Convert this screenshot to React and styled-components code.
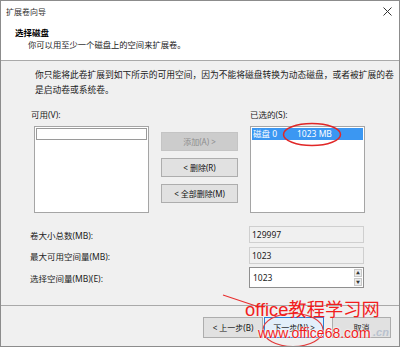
import React from "react";
import styled, { createGlobalStyle } from "styled-components";

const GlobalStyle = createGlobalStyle`
  html, body { margin: 0; padding: 0; background: #fff; }
  body { font-family: "Noto Sans", "Noto Sans CJK SC", sans-serif; }
`;

const Window = styled.div`
  position: relative;
  box-sizing: border-box;
  width: 400px;
  height: 347px;
  border: 1px solid #8c8c8c;
  background: #f0f0f0;
  display: flex;
  flex-direction: column;
  overflow: hidden;
  font-size: 8.5px;
  color: #1b1b1b;
`;

const Header = styled.div`
  box-sizing: border-box;
  height: 60px;
  background: #fff;
  border-bottom: 1px solid #a9a9a9;
`;

const TitleBar = styled.div`
  height: 20px;
  display: flex;
  align-items: center;
  justify-content: space-between;
  padding: 0 7px 0 5px;
  font-size: 8px;
  color: #333;
`;

const PageTitle = styled.div`
  margin: 6px 0 0 14px;
  line-height: 12px;
  font-weight: bold;
  font-size: 8.5px;
  color: #000;
`;

const PageSub = styled.div`
  margin-left: 27px;
  line-height: 12px;
  font-size: 8.3px;
`;

const Body = styled.div`
  flex: 1;
`;

const Desc = styled.div`
  margin: 7px 0 0 34px;
  line-height: 15px;
  font-size: 8.75px;
  white-space: nowrap;
`;

const ListsGrid = styled.div`
  display: grid;
  grid-template-columns: 115px 77px 115px;
  column-gap: 12px;
  margin: 11px 0 0 33px;
`;

const ListColumn = styled.div`
  display: flex;
  flex-direction: column;
`;

const ListLabel = styled.div`
  height: 12px;
  line-height: 12px;
  margin: 0 0 5px ${(p) => p.$shift || 0}px;
`;

const ListBox = styled.div`
  box-sizing: border-box;
  height: 87px;
  background: #fff;
  border: 1px solid #a5a5a5;
  padding: 1px;
`;

const EmptyRow = styled.div`
  box-sizing: border-box;
  height: 12px;
  border: 1px solid #9a9a9a;
`;

const SelectedRow = styled.div`
  height: 12px;
  line-height: 12px;
  background: #3b97f2;
  color: #fff;
  display: flex;
  padding-left: 1px;
`;

const Cell = styled.span`
  width: ${(p) => p.$w}px;
`;

const ButtonStack = styled.div`
  display: flex;
  flex-direction: column;
  gap: 7px;
  padding-top: 23px;
`;

const Button = styled.div`
  box-sizing: border-box;
  height: ${(p) => p.$h || 19}px;
  width: ${(p) => p.$w || 77}px;
  display: flex;
  align-items: center;
  justify-content: center;
  font-size: 8px;
  border: 1px solid ${(p) => (p.$primary ? "#2a7fd4" : p.$disabled ? "#c4c4c4" : "#adadad")};
  background: ${(p) => (p.$primary ? "#e3effa" : p.$disabled ? "#cccccc" : "#e1e1e1")};
  color: ${(p) => (p.$disabled ? "#8c8c8c" : "#111")};
`;

const Fields = styled.div`
  display: flex;
  flex-direction: column;
  margin: 13px 0 0 29px;
`;

const FieldRow = styled.div`
  display: flex;
  align-items: center;
  margin-top: ${(p) => p.$gap || 0}px;
`;

const FieldLabel = styled.div`
  width: 219px;
`;

const ReadOnly = styled.div`
  box-sizing: border-box;
  width: 115px;
  height: 17px;
  line-height: 15px;
  padding-left: 2px;
  background: #f0f0f0;
  border: 1px solid #cfcfcf;
`;

const SpinBox = styled.div`
  box-sizing: border-box;
  width: 115px;
  height: 21px;
  display: flex;
  align-items: center;
  padding-left: 3px;
  background: #fff;
  border: 1px solid #8f8f8f;
`;

const SpinValue = styled.div`
  flex: 1;
`;

const SpinArrows = styled.div`
  width: 8px;
  height: 17px;
  margin-right: 1px;
  display: flex;
  flex-direction: column;
  gap: 1px;
`;

const Arrow = styled.div`
  flex: 1;
  background: #ececec;
  border: 1px solid #c8c8c8;
  display: flex;
  align-items: center;
  justify-content: center;
  font-size: 4px;
  color: #333;
`;

const Footer = styled.div`
  box-sizing: border-box;
  height: 41px;
  border-top: 1px solid #a9a9a9;
  display: flex;
  justify-content: flex-end;
  padding: 11px 8px 0 0;
`;

const FooterGroup = styled.div`
  display: flex;
  gap: ${(p) => p.$gap || 0}px;
  margin-left: ${(p) => p.$ml || 0}px;
`;

const Overlay = styled.svg`
  position: absolute;
  left: 0;
  top: 0;
  pointer-events: none;
`;

const MarkTitle = styled.div`
  position: absolute;
  left: 244px;
  top: 298px;
  font-family: "Liberation Sans", "Noto Sans CJK SC", sans-serif;
  font-size: 18.3px;
  line-height: 21px;
  color: #f21d1d;
  white-space: nowrap;
`;

const MarkUrl = styled.div`
  position: absolute;
  left: 257px;
  top: 324px;
  font-family: "Liberation Sans", sans-serif;
  font-size: 14px;
  line-height: 16px;
  color: #f01c1c;
  text-shadow: 0 0 2px #fff, 0 0 2px #fff;
  white-space: nowrap;
`;

const MarkCn = styled.div`
  position: absolute;
  left: 372px;
  top: 325px;
  font-family: "Liberation Sans", sans-serif;
  font-style: italic;
  font-weight: bold;
  font-size: 11px;
  color: #b9c2cf;
`;

const CloseIcon = () => (
  <svg width="9" height="9" viewBox="0 0 9 9">
    <path d="M0.5 0.5 L8.5 8.5 M8.5 0.5 L0.5 8.5" stroke="#333" strokeWidth="1" />
  </svg>
);

export default function App() {
  return (
    <>
      <GlobalStyle />
      <Window>
        <Header>
          <TitleBar>
            <span>扩展卷向导</span>
            <CloseIcon />
          </TitleBar>
          <PageTitle>选择磁盘</PageTitle>
          <PageSub>你可以用至少一个磁盘上的空间来扩展卷。</PageSub>
        </Header>
        <Body>
          <Desc>
            你只能将此卷扩展到如下所示的可用空间，因为不能将磁盘转换为动态磁盘，或者被扩展的卷
            <br />
            是启动卷或系统卷。
          </Desc>
          <ListsGrid>
            <ListColumn>
              <ListLabel $shift={-3}>可用(V):</ListLabel>
              <ListBox>
                <EmptyRow />
              </ListBox>
            </ListColumn>
            <ButtonStack>
              <Button $disabled>添加(A) &gt;</Button>
              <Button>&lt; 删除(R)</Button>
              <Button>&lt; 全部删除(M)</Button>
            </ButtonStack>
            <ListColumn>
              <ListLabel>已选的(S):</ListLabel>
              <ListBox>
                <SelectedRow>
                  <Cell $w={44}>磁盘 0</Cell>
                  <Cell $w={50}>1023 MB</Cell>
                </SelectedRow>
              </ListBox>
            </ListColumn>
          </ListsGrid>
          <Fields>
            <FieldRow>
              <FieldLabel>卷大小总数(MB):</FieldLabel>
              <ReadOnly>129997</ReadOnly>
            </FieldRow>
            <FieldRow $gap={4}>
              <FieldLabel>最大可用空间量(MB):</FieldLabel>
              <ReadOnly>1023</ReadOnly>
            </FieldRow>
            <FieldRow $gap={3}>
              <FieldLabel>选择空间量(MB)(E):</FieldLabel>
              <SpinBox>
                <SpinValue>1023</SpinValue>
                <SpinArrows>
                  <Arrow>▲</Arrow>
                  <Arrow>▼</Arrow>
                </SpinArrows>
              </SpinBox>
            </FieldRow>
          </Fields>
        </Body>
        <Footer>
          <FooterGroup $gap={1}>
            <Button $w={60} $h={21}>&lt; 上一步(B)</Button>
            <Button $w={60} $h={21} $primary>下一步(N) &gt;</Button>
          </FooterGroup>
          <FooterGroup $ml={8}>
            <Button $w={59} $h={21}>取消</Button>
          </FooterGroup>
        </Footer>
        <Overlay width="400" height="347">
          <ellipse cx="311" cy="133.5" rx="28.5" ry="11" fill="none" stroke="#e12727" strokeWidth="1.5" />
          <line x1="222" y1="294" x2="258" y2="306" stroke="#e83030" strokeWidth="1.2" />
          <ellipse cx="292" cy="329" rx="30" ry="16.5" fill="none" stroke="#e23a3a" strokeWidth="1.2" />
        </Overlay>
        <MarkTitle>office教程学习网</MarkTitle>
        <MarkUrl>www.office68.com</MarkUrl>
        <MarkCn>.cn</MarkCn>
      </Window>
    </>
  );
}
